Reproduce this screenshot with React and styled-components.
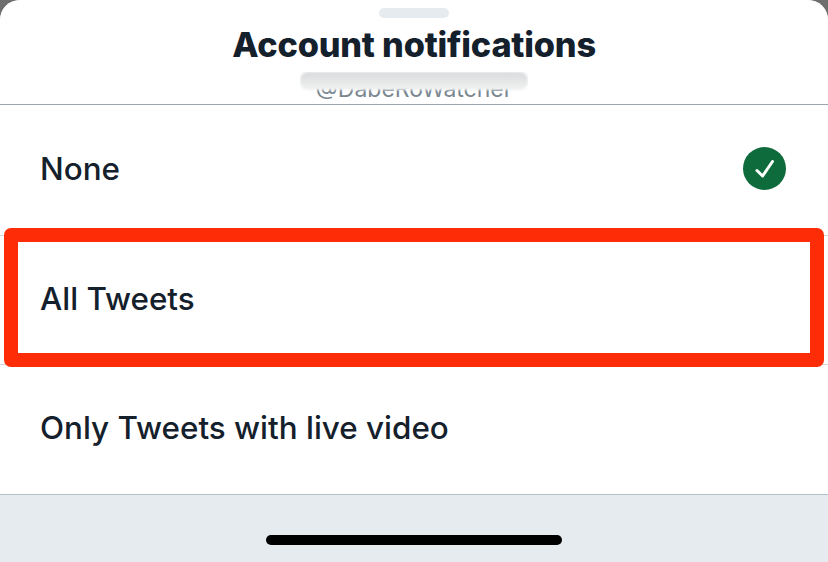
import styled, { createGlobalStyle } from 'styled-components';

const GlobalStyle = createGlobalStyle`
  html, body {
    margin: 0;
    padding: 0;
    background: #6e6e6e;
  }
  body {
    font-family: Inter, "Liberation Sans", sans-serif;
  }
`;

const Sheet = styled.div`
  width: 828px;
  height: 562px;
  display: flex;
  flex-direction: column;
  overflow: hidden;
  border-radius: 20px 20px 0 0;
  background: #e6ebef;
`;

const Header = styled.header`
  height: 105px;
  flex: none;
  box-sizing: border-box;
  padding-top: 8px;
  display: flex;
  flex-direction: column;
  align-items: center;
  background: #fff;
  border-bottom: 1px solid #9aa7af;
`;

const Grabber = styled.div`
  width: 70px;
  height: 10px;
  border-radius: 5px;
  background: #e6ebef;
`;

const Title = styled.h1`
  margin: 7px 0 0;
  font-size: 34.3px;
  line-height: 40px;
  font-weight: 800;
  letter-spacing: -0.2px;
  color: #14202b;
`;

const Handle = styled.div`
  position: relative;
  margin-top: 7px;
  width: 228px;
  height: 32px;
  font-size: 23px;
  line-height: 34px;
  white-space: nowrap;
  display: flex;
  justify-content: center;
  color: #7b8790;
  overflow: hidden;
`;

const Smudge = styled.div`
  position: absolute;
  left: 0;
  right: 0;
  top: 0;
  height: 18px;
  border-radius: 8px;
  background: linear-gradient(#d9dbdc, #f1f2f2);
  filter: blur(1px);
`;

const Options = styled.div`
  position: relative;
  flex: none;
  background: #fff;
  border-bottom: 1px solid #b4c0c7;
`;

const Row = styled.div`
  height: 129.6px;
  box-sizing: border-box;
  padding: 0 42px 2px 40px;
  display: flex;
  align-items: center;
  justify-content: space-between;
  border-top: ${(p) => (p.$first ? 'none' : '1px solid #cfd8dd')};
`;

const Label = styled.span`
  font-size: 31.4px;
  font-weight: 500;
  color: #14202b;
`;

const Check = styled.span`
  width: 43px;
  height: 43px;
  border-radius: 50%;
  background: #0e6b3c;
  display: flex;
  align-items: center;
  justify-content: center;
`;

// red annotation drawn over the second row
const Highlight = styled.div`
  position: absolute;
  left: 4px;
  right: 4px;
  top: 123px;
  height: 139px;
  box-sizing: border-box;
  border: 14px solid #ff2d07;
  border-radius: 7px;
`;

const Footer = styled.footer`
  flex: 1;
  display: flex;
  justify-content: center;
  padding-top: 40px;
`;

const HomeBar = styled.div`
  width: 296px;
  height: 10px;
  border-radius: 5px;
  background: #000;
`;

const options = ['None', 'All Tweets', 'Only Tweets with live video'];

export default function App() {
  return (
    <Sheet>
      <GlobalStyle />
      <Header>
        <Grabber />
        <Title>Account notifications</Title>
        <Handle>
          @DabeRoWatcher
          <Smudge />
        </Handle>
      </Header>
      <Options>
        {options.map((label, i) => (
          <Row key={label} $first={i === 0}>
            <Label>{label}</Label>
            {i === 0 && (
              <Check>
                <svg width="22" height="22" viewBox="0 0 22 22" fill="none">
                  <path d="M3 12.5 L8.6 18 L18.5 3.5" stroke="#fff" strokeWidth="3" strokeLinecap="round" strokeLinejoin="round" />
                </svg>
              </Check>
            )}
          </Row>
        ))}
        <Highlight />
      </Options>
      <Footer>
        <HomeBar />
      </Footer>
    </Sheet>
  );
}
